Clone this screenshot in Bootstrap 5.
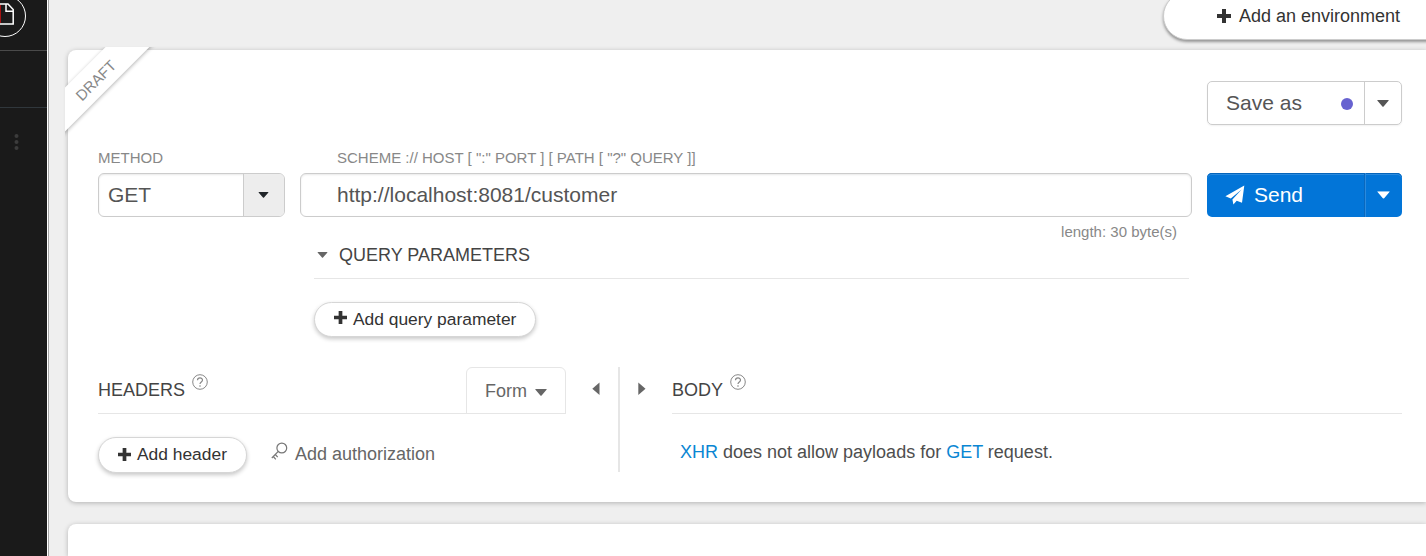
<!DOCTYPE html>
<html lang="en">
<head>
<meta charset="utf-8">
<title>Request editor</title>
<meta name="viewport" content="width=device-width, initial-scale=1">
<link href="https://cdn.jsdelivr.net/npm/bootstrap@5.3.0/dist/css/bootstrap.min.css" rel="stylesheet">
<style>
  body { font-family: "Liberation Sans", Arial, sans-serif; font-size: 18px; line-height: 24px; color: #4e4e4e; background: #efefef; height: 556px; }
  svg { display: block; flex: none; }
  .side-rail { width: 49px; background: #1a1a1a; border-right: 1px solid #a3a3a3; box-shadow: inset -1px 0 #fff; }
  .rail-logo { height: 51px; border-bottom: 1px solid #4a4a4a; margin-right: 1px; }
  .rail-gap { height: 57px; border-bottom: 1px solid #30373c; margin-right: 1px; }
  .rail-dots { padding: 26px 0 0 13px; }
  .workspace { width: 1377px; padding-left: 19px; }
  .env-bar { height: 50px; }
  .env-btn { width: 290px; height: 48px; margin: -8px -27px 0 0; padding: 0 0 0 53px; }
  .pill { background: #fff; border: 1px solid #d6d6d6; border-radius: 30px; box-shadow: 0 2px 4px rgba(0,0,0,.22); color: #333; font-size: 17.4px; line-height: 24px; }
  .env-btn.pill { font-size: 18px; border-color: #ccc; box-shadow: 0 2px 3px rgba(0,0,0,.38); }
  .panel { background: #fff; border-radius: 8px 0 0 8px; box-shadow: 0 1px 5px rgba(0,0,0,.25); }
  .panel-request { height: 452px; padding: 31px 24px 0 30px; }
  .panel-next { height: 32px; margin-top: 22px; border-radius: 8px 0 0 0; }
  .ribbon-box { left: -3px; top: -3px; width: 96px; height: 92px; }
  .ribbon { left: -45px; top: 17px; width: 150px; height: 31px; transform: rotate(-45deg); background: #fff; box-shadow: 0 1px 4px rgba(0,0,0,.3); color: #888; font-size: 15px; line-height: 33px; }
  .split { height: 44px; width: 195px; border-radius: 5px; font-size: 21px; }
  .split-main { width: 158px; padding-left: 18px; }
  .split-arrow { padding-right: 1px; }
  .split-save { border: 1px solid #ccc; color: #555; box-shadow: 0 1px 2px rgba(0,0,0,.06); }
  .split-save .split-main { width: 157px; border-right: 1px solid #ccc; }
  .split-send { background: #0275d8; color: #fff; box-shadow: inset 0 1px #0465bb, inset 0 2px #2a8ade; }
  .split-send .split-main { border-right: 1px solid #0a68bd; box-shadow: 1px 0 #2a8ade; }
  .unsaved { width: 12px; height: 12px; background: #6762d0; margin: 2px 11px 0 0; }
  .tag { font-size: 15px; line-height: 18px; color: #888; }
  .box { height: 44px; border: 1px solid #ccc; border-radius: 6px; font-size: 21px; color: #555; box-shadow: inset 0 1px 2px rgba(0,0,0,.09); margin-top: 6px; }
  .method-col { width: 187px; margin-right: 15px; }
  .url-col { width: 892px; margin-right: 15px; }
  .method-arrow { width: 41px; background: #ededed; border-left: 1px solid #ccc; padding-right: 1px; }
  .query-block { margin-left: 216px; width: 875px; }
  .rule { border-bottom: 1px solid #e6e6e6; }
  .heading { color: #444; }
  .add-query { width: 222px; height: 35px; padding: 0 0 2px 19px; }
  .add-header { width: 149px; height: 36px; padding: 0 0 2px 19px; }
  .halves { margin-top: 30px; height: 105px; }
  .headers-col { width: 468px; flex: none; }
  .tab-form { width: 100px; height: 47px; border: 1px solid #e6e6e6; border-radius: 6px 6px 0 0; color: #666; padding-left: 18px; }
  .divider { width: 2px; background: #e6e6e6; }
  .accent { color: #0a86d3; }
  .auth { color: #666; }
</style>
</head>
<body class="d-flex overflow-hidden">
<svg class="d-none" aria-hidden="true">
  <symbol id="plus" viewBox="0 0 14 14"><path d="M5 0h4v5h5v4H9v5H5V9H0V5h5z" fill="currentColor"/></symbol>
  <symbol id="down" viewBox="0 0 12 7"><path d="M.8 0h10.400q1 0 .3.800L6.600 6.500q-.6.700-1.200 0L.5.800Q-.2 0 .8 0z" fill="currentColor"/></symbol>
  <symbol id="help" viewBox="0 0 16 16"><circle cx="8" cy="8" r="7.300" fill="none" stroke="currentColor" stroke-width="1"/><path d="M5.500 6.200C5.500 3.100 10.500 3.100 10.500 6.100C10.500 7.900 8 8 8 10M8 11.300v1.400" fill="none" stroke="currentColor" stroke-width="1.200"/></symbol>
</svg>

<aside class="side-rail flex-shrink-0">
  <div class="rail-logo overflow-hidden">
    <svg width="46" height="50" viewBox="0 0 46 50"><circle cx="5" cy="16" r="20.500" fill="none" stroke="#fff" stroke-width="1"/><path d="M0 4h8l5.200 5.500V24H0M6 4v7.200h7" fill="none" stroke="#fff" stroke-width="1.500"/><path d="M.5 5v18" stroke="#a51212"/></svg>
  </div>
  <div class="rail-gap"></div>
  <div class="rail-dots"><svg width="8" height="18" viewBox="0 0 8 18" fill="#3c3c3c"><circle cx="3.500" cy="2" r="2"/><circle cx="3.500" cy="8" r="2"/><circle cx="3.500" cy="14" r="2"/></svg></div>
</aside>

<main class="workspace flex-shrink-0">
  <div class="env-bar d-flex justify-content-end">
    <div class="pill env-btn d-flex align-items-center"><svg width="14" height="14" class="me-2"><use href="#plus"/></svg><span>Add an environment</span></div>
  </div>

  <section class="panel panel-request position-relative">
    <div class="ribbon-box position-absolute overflow-hidden"><div class="ribbon position-absolute text-center">DRAFT</div></div>

    <div class="d-flex justify-content-end">
      <div class="split split-save d-flex">
        <div class="split-main d-flex align-items-center justify-content-between"><span>Save as</span><span class="unsaved rounded-circle"></span></div>
        <div class="split-arrow flex-fill d-flex align-items-center justify-content-center"><svg width="12" height="7"><use href="#down"/></svg></div>
      </div>
    </div>

    <div class="d-flex mt-4">
      <div class="method-col">
        <div class="tag">METHOD</div>
        <div class="box d-flex overflow-hidden">
          <div class="flex-fill d-flex align-items-center" style="padding-left:9px"><span>GET</span></div>
          <div class="method-arrow d-flex align-items-center justify-content-center text-dark"><svg width="11" height="6"><use href="#down"/></svg></div>
        </div>
      </div>
      <div class="url-col">
        <div class="tag" style="padding-left:37px">SCHEME :// HOST [ ":" PORT ] [ PATH [ "?" QUERY ]]</div>
        <div class="box d-flex align-items-center" style="padding-left:36px"><span>http://localhost:8081/customer</span></div>
        <div class="tag text-end" style="padding:6px 15px 0 0">length: 30 byte(s)</div>
      </div>
      <div class="split split-send d-flex align-self-start mt-4">
        <div class="split-main d-flex align-items-center">
          <svg width="20" height="20" viewBox="0 0 20 20" style="margin-right:9px"><path d="M19.300.6 17 17.800 11.700 15.800 8.400 19.500 7.400 14.400 16.600 4.400 5.800 13.600.4 11.300z" fill="#fff"/></svg><span>Send</span>
        </div>
        <div class="split-arrow flex-fill d-flex align-items-center justify-content-center"><svg width="13" height="8" viewBox="0 0 12 7"><use href="#down"/></svg></div>
      </div>
    </div>

    <div class="query-block">
      <div class="rule heading d-flex align-items-center" style="height:38px;padding:0 0 10px 3px"><svg width="11" height="6" style="margin-right:11px;color:#666"><use href="#down"/></svg><span>QUERY PARAMETERS</span></div>
      <div class="pill add-query d-flex align-items-center" style="margin-top:23px"><svg width="13" height="13" style="margin:-2px 6px 0 0"><use href="#plus"/></svg><span>Add query parameter</span></div>
    </div>

    <div class="halves d-flex">
      <div class="headers-col">
        <div class="rule d-flex justify-content-between" style="height:47px">
          <div class="heading d-flex" style="padding-top:11px"><span>HEADERS</span><svg width="16" height="16" style="margin:-4px 0 0 7px;color:#888"><use href="#help"/></svg></div>
          <div class="tab-form d-flex align-items-center"><span>Form</span><svg width="12" height="7" style="margin:4px 0 0 8px"><use href="#down"/></svg></div>
        </div>
        <div class="d-flex" style="margin-top:23px">
          <div class="pill add-header d-flex align-items-center"><svg width="13" height="13" style="margin:0 6px 0 0"><use href="#plus"/></svg><span>Add header</span></div>
          <div class="auth d-flex" style="padding:5px 0 0 24px"><svg width="17" height="19" viewBox="0 0 17 19" style="margin-right:7px"><g fill="none" stroke="#777" stroke-width="1.200"><circle cx="10.800" cy="6" r="4.900"/><path d="M7.300 9.400.8 16M2.300 14.500l2.500 2.800M4.300 12.500l2.400 2.600"/></g></svg><span>Add authorization</span></div>
        </div>
      </div>
      <svg width="8" height="14" viewBox="0 0 8 14" style="margin:15px 18px 0 26px;color:#666"><path d="M7.500.500v12.500L.3 6.800z" fill="currentColor"/></svg>
      <div class="divider"></div>
      <svg width="8" height="14" viewBox="0 0 8 14" style="margin:15px 26px 0 18px;color:#666"><path d="M.3.500v12.500l7.200-6.200z" fill="currentColor"/></svg>
      <div class="flex-fill">
        <div class="rule heading d-flex" style="height:47px;padding-top:11px"><span>BODY</span><svg width="16" height="16" style="margin:-4px 0 0 7px;color:#888"><use href="#help"/></svg></div>
        <div style="padding:26px 0 0 8px"><span class="accent">XHR</span> does not allow payloads for <span class="accent">GET</span> request.</div>
      </div>
    </div>
  </section>
  <section class="panel panel-next"></section>
</main>
<script src="https://cdn.jsdelivr.net/npm/bootstrap@5.3.0/dist/js/bootstrap.bundle.min.js"></script>
</body>
</html>
